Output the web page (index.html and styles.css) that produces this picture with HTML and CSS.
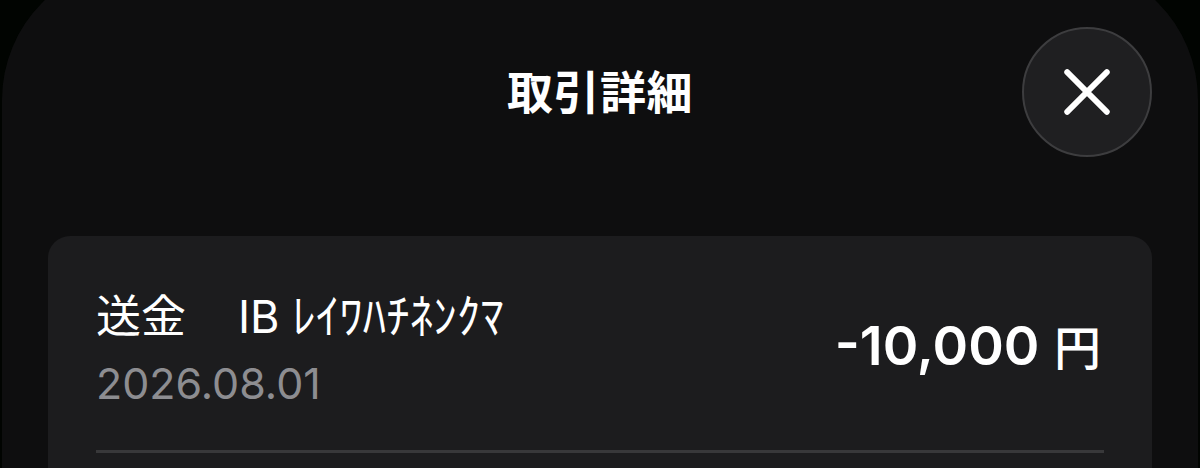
FILE: index.html
```html
<!DOCTYPE html>
<html lang="ja">
<head>
<meta charset="utf-8">
<title>取引詳細</title>
<link rel="stylesheet" href="styles.css">
</head>
<body>
<div class="sheet">
  <header class="header">
    <div class="spacer"></div>
    <h1 class="title">取引詳細</h1>
    <button class="close" aria-label="閉じる">
      <svg viewBox="0 0 44 44" width="46" height="46" aria-hidden="true">
        <path d="M3 3 L41 41 M41 3 L3 41" stroke="#ffffff" stroke-width="5.5" stroke-linecap="round" fill="none"/>
      </svg>
    </button>
  </header>
  <section class="card">
    <div class="row">
      <div class="info">
        <div class="name"><span class="kind">送金</span><span class="payee">IB <span class="kana">ﾚｲﾜﾊﾁﾈﾝｸﾏ</span></span></div>
        <div class="date">2026.08.01</div>
      </div>
      <div class="amount">-10,000 <span class="yen">円</span></div>
    </div>
    <div class="divider"></div>
  </section>
</div>
</body>
</html>
```
FILE: styles.css
```css
html, body {
  margin: 0;
  padding: 0;
  background: #010401;
  overflow: hidden;
}
body {
  width: 1200px;
  height: 468px;
  font-family: "Inter", "Noto Sans CJK JP", sans-serif;
  color: #ffffff;
}
.sheet {
  margin: -38px 2px 0;
  padding: 65px 46px 0;
  height: 560px;
  background: #0e0e0f;
  border-radius: 138px 138px 0 0;
}
.header {
  display: grid;
  grid-template-columns: 130px 1fr 130px;
  align-items: center;
  height: 130px;
}
.title {
  margin: 0;
  text-align: center;
  font-family: "Noto Sans CJK JP", sans-serif;
  font-weight: 700;
  font-size: 46px;
  line-height: 56px;
  letter-spacing: 0.5px;
  position: relative;
  top: -3px;
}
.close {
  width: 130px;
  height: 130px;
  border-radius: 50%;
  background: #1f1f21;
  border: 2px solid #3d3d3f;
  display: flex;
  align-items: center;
  justify-content: center;
  padding: 0;
}
.card {
  margin-top: 79px;
  background: #1c1c1e;
  border-radius: 22px;
  padding: 49px 48px 0;
  height: 400px;
}
.row {
  display: flex;
  justify-content: space-between;
  align-items: center;
}
.name {
  font-family: "Inter", "Noto Sans CJK JP", sans-serif;
  font-size: 45px;
  line-height: 56px;
  white-space: pre;
}
.kind {
  font-family: "Noto Sans CJK JP", sans-serif;
}
.payee {
  margin-left: 52px;
}
.kana {
  font-family: "Noto Sans CJK JP", sans-serif;
  font-size: 47px;
}
.date {
  margin-top: 10px;
  font-size: 43px;
  line-height: 56px;
  color: #8d8d91;
}
.amount {
  font-size: 54px;
  font-weight: 600;
  line-height: 60px;
  position: relative;
  top: -3px;
  left: -3px;
}
.yen {
  font-family: "Noto Sans CJK JP", sans-serif;
  font-weight: 500;
  font-size: 47px;
  margin-left: 1px;
}
.divider {
  margin-top: 39px;
  height: 3px;
  background: #38383a;
}
```
